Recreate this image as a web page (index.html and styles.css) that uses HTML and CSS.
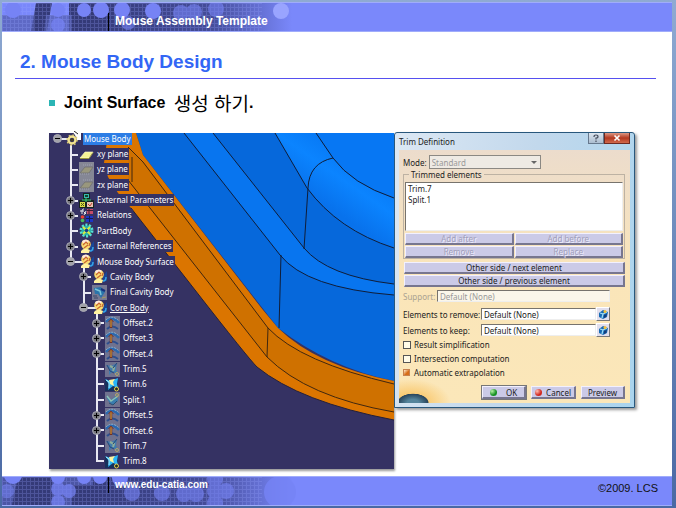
FILE: index.html
```html
<!DOCTYPE html>
<html lang="ko">
<head>
<meta charset="utf-8">
<meta name="viewport" content="width=device-width, initial-scale=1">
<title>Mouse Assembly Template</title>
<link rel="stylesheet" href="styles.css">
</head>
<body>
<svg class="defs" aria-hidden="true">
  <defs>
    <linearGradient id="fade" x1="0" x2="1" y1="0" y2="0">
      <stop offset="0" stop-color="#343a78"/><stop offset="0.6" stop-color="#454d9a"/><stop offset="1" stop-color="#7a88fb"/>
    </linearGradient>
    <pattern id="mesh" width="4" height="4" patternUnits="userSpaceOnUse">
      <path d="M0 .5H4M.5 0V4" stroke="#98a4ff" stroke-width="1" opacity=".25"/>
    </pattern>
    <linearGradient id="fillet" gradientUnits="userSpaceOnUse" x1="340" y1="215" x2="375" y2="165">
      <stop offset="0" stop-color="#0872ec"/><stop offset=".5" stop-color="#0b84ff"/><stop offset="1" stop-color="#0676f2"/>
    </linearGradient>
    <symbol id="i-root" viewBox="0 0 15 15">
      <path d="M6 0H15V9H11L9 4Z" fill="#fff"/><path d="M8 0L12 3" stroke="#222"/>
      <circle cx="6" cy="9" r="3.5" fill="none" stroke="#f2e490" stroke-width="2.5"/>
      <circle cx="6" cy="9" r="5" fill="none" stroke="#dccb74" stroke-width="1.5" stroke-dasharray="1.6 2.3"/><circle cx="6" cy="9" r="1.5" fill="#474020"/>
    </symbol>
    <symbol id="i-plane" viewBox="0 0 15 15"><path d="M1 11L6 5H14L10 11Z" fill="#f5f394" stroke="#fffed0" stroke-width=".6"/><path d="M1 11.5H10L14 5.5" fill="none" stroke="#99963c"/></symbol>
    <symbol id="i-planeoff" viewBox="0 0 15 15"><path fill="#858795" d="M0 0H15V15H0Z"/><path d="M1 11L6 5H14L10 11Z" fill="#99977d" stroke="#6f7072" stroke-width=".8"/><path d="M1 12H11M4 3H14" stroke="#a0a2b1" stroke-dasharray="1 1"/></symbol>
    <symbol id="i-params" viewBox="0 0 15 15"><path fill="#17251e" d="M4 0H11V7H15V15H0V7H4Z"/><path fill="#35b9ae" d="M5 1H10V5H5Z"/><path d="M6 2H9V4H6Z" fill="#17452f"/><path fill="#d9dd46" d="M1 9H6V14H1Z"/><path fill="#e9c6b3" d="M8 9H14V14H8Z"/><path d="M2 10L5 13M5 10L2 13" stroke="#4e521d"/><path d="M9 11L11 13L13 10" stroke="#bc3e31" fill="none"/><path d="M7 5V9M3 7H12" stroke="#3bd376"/></symbol>
    <symbol id="i-relations" viewBox="0 0 15 15"><path d="M5 1C3 1 3 2 3 6M1 3H5M5 4L7 6M7 3L5 7" stroke="#eee" fill="none"/><path fill="#c44d69" d="M8 1H14V6H8Z"/><path d="M8 2.5H14M10 1V6" stroke="#391c34"/><path fill="#1d36c5" d="M7 8H14V14H7Z"/><path d="M7 10.5H14M10.500 8V14" stroke="#111b56"/><circle cx="3.500" cy="9" r="1.800" fill="#eb4136"/><circle cx="3.500" cy="12.500" r="1.800" fill="#47bd59"/></symbol>
    <symbol id="i-part" viewBox="0 0 15 15"><circle cx="7.500" cy="7.500" r="5.500" fill="#168878" stroke="#57ded6" stroke-width="3" stroke-dasharray="2 1.450"/><circle cx="7.500" cy="7.500" r="4.500" fill="#28b3af"/><path d="M4 4L11 11M11 4L4 11" stroke="#d8e844" stroke-width="2"/><circle cx="7.500" cy="7.500" r="1.800" fill="#173c85"/></symbol>
    <symbol id="i-set" viewBox="0 0 15 15"><path d="M11 13L15 12V2L11 7Z" fill="#194697"/><circle cx="7" cy="5.500" r="4.800" fill="#f9dc72"/><path d="M3 2Q7-1 10 2L8 4H4Z" fill="#ffe9dc"/><path d="M4 6L7 3L9 5M5 9L9 6M10 7L11 4" fill="none" stroke="#c96432" stroke-width="1.200"/><path d="M2 12Q5 8 11 11L10 14H2Z" fill="#fff2a0"/><path d="M11 12Q14 12 14 8" fill="none" stroke="#39a5e6" stroke-width="1.500"/></symbol>
    <symbol id="i-join" viewBox="0 0 15 15"><path fill="#777992" d="M0 0H15V15H0Z"/><path d="M2 3L9 2L13 7L9 13L6 9L3 9Z" fill="#2b74aa"/><path d="M3 4L8 6L9 10" stroke="#7dc5d7" stroke-width="1.500" fill="none"/><path d="M9 4L13 6" stroke="#18337c" stroke-width="2"/><path d="M10 13L14 12" stroke="#a59d61"/><path d="M1 11H5M2 13H6" stroke="#38466a"/></symbol>
    <symbol id="i-offset" viewBox="0 0 15 15"><path fill="#70728f" d="M0 0H15V15H0Z"/><path d="M1 6Q7-1 14 7" fill="none" stroke="#2c68ae" stroke-width="2.500"/><path d="M1 4Q7-2 14 5" fill="none" stroke="#88b5d5" stroke-dasharray="2 1"/><path d="M2 13Q7 8 13 13" stroke="#2c4f90" stroke-width="2" fill="none"/><path d="M6 4V12" stroke="#732f25" stroke-width="2.500"/><path d="M6 4V11" stroke="#d9ad45"/><path d="M3.500 6L6 3L8.500 6" stroke="#7e3827" fill="none"/></symbol>
    <symbol id="i-trimoff" viewBox="0 0 15 15"><path fill="#70728f" d="M0 0H15V15H0Z"/><path d="M1 3L6 4L12 1L11 7L13 12L7 10L4 13L4 7Z" fill="#407bae"/><path d="M5 4L9 6L8 9" fill="none" stroke="#8dad9a" stroke-width="2"/><path d="M2 3L5 9L9 11M12 1L8 6" stroke="#284576" fill="none"/><circle cx="12" cy="12" r="1.500" fill="none" stroke="#b5a669"/></symbol>
    <symbol id="i-trim" viewBox="0 0 15 15"><path fill="#17315c" d="M0 3H13V14H0Z"/><path d="M0 2L5 4L13 1L12 7L13 11L8 9L3 13L4 7Z" fill="#29b5f7"/><path d="M4 3L10 2L8 5L9 9L5 7Z" fill="#fbf4a0"/><path d="M1 3L4 5L4 11" stroke="#a9eeff" fill="none"/><circle cx="11.500" cy="12" r="2" fill="#292e22" stroke="#e4d251"/></symbol>
    <symbol id="i-split" viewBox="0 0 15 15"><path fill="#70728f" d="M0 0H15V15H0Z"/><path d="M1 4L6 8L12 3L13 9L8 13L4 10Z" fill="#397cae"/><path d="M2 4L6 9L13 4" fill="none" stroke="#8dc2b5" stroke-width="1.500"/><path d="M4 11L8 13L12 9" stroke="#294d70" fill="none"/><circle cx="12" cy="3" r="1.500" fill="none" stroke="#b5a669"/></symbol>
    <symbol id="i-pick" viewBox="0 0 11 11"><path d="M1 4L5 1L10 3L9 8L5 10L1 8Z" fill="#166ab4"/><path d="M2 4L5 5L4 9M5 5L9 3" stroke="#9edcf5" stroke-width="1.300" fill="none"/><path d="M6 6L9 5L8 8L6 9Z" fill="#163d7b"/><circle cx="7" cy="2.500" r="1.500" fill="#f3c13b"/></symbol>
  </defs>
</svg>
<div class="slide">
  <header class="band">
    <svg class="bokeh" viewBox="0 0 300 28" preserveAspectRatio="none" aria-hidden="true">
      <path fill="#343a78" d="M34 0H50L45 28H29ZM67 0H91V28H67Z"/><path fill="#525cae" d="M0 12H32V28H0ZM44 12H70V28H42Z" opacity=".7"/>
      <path fill="url(#fade)" d="M91 0H290V28H91Z"/><path fill="url(#mesh)" d="M0 0H260V28H0Z"/>
      <g fill="#7683f5"><circle cx="11" cy="7" r="8"/><circle cx="56" cy="7" r="7"/><circle cx="56" cy="22" r="7" opacity=".7"/><circle cx="82" cy="7" r="7"/><circle cx="99" cy="7" r="8"/><circle cx="120" cy="7" r="8"/><circle cx="151" cy="8" r="8"/><g opacity=".6"><circle cx="179" cy="10" r="8"/><circle cx="192" cy="9" r="8"/><circle cx="214" cy="6" r="8"/><circle cx="126" cy="20" r="7"/></g></g>
      <circle cx="279" cy="8" r="8" fill="#99a4ff"/>
    </svg>
    <p class="band-title">Mouse Assembly Template</p>
  </header>
  <main>
    <h1>2. Mouse Body Design</h1>
    <h2>Joint Surface <span>생성 하기</span>.</h2>
    <div class="screens">
      <section class="viewport" aria-label="Model view">
        <svg class="scene" viewBox="49 133 345 336" preserveAspectRatio="none" aria-hidden="true">
          <path fill="#353263" d="M49 133H394V469H49Z"/>
          <path fill="#0668db" d="M136 133H394V381Q330 368 278 328L143 155Z"/>
          <path fill="#0875ef" d="M184 133H213L304 248Q327 276 394 284V295Q306 288 280 255Z"/>
          <path fill="url(#fillet)" d="M275 133H316L333 158Q352 184 394 198V248Q338 230 307 188Z"/>
          <path fill="#0777f3" d="M316 133H394V198Q352 184 333 158Z"/>
          <path fill="#db7500" d="M108 133H136L143 155L263 310L278 328Q317 366 394 381V420Q300 402 257 367Q248 358 195 290L131 208L118 193L108 177L104 163Z"/>
          <path fill="#cf7100" d="M128 147L143 162L268 328Q300 362 394 384V412Q307 397 267 357L128 180Z"/>
          <g fill="none" stroke="#101d38" stroke-width="1">
            <path d="M184 133L280 255Q306 288 394 295M213 133L304 248Q327 276 394 284M275 133L307 188Q338 230 394 248M316 133L333 158Q352 184 394 198M333 158Q309 163 308 188L304 249M281 255L279 328"/>
            <path stroke="#40270f" d="M128 147L143 162L268 328Q300 362 394 384M128 180L267 357Q307 397 394 412M268 328L267 357M132 157V182"/>
            <path d="M131 208L195 290Q248 358 257 367Q300 402 394 420" stroke="#25203a"/>
          </g>
          <g fill="none" stroke="#e8e8f2" stroke-width="2">
            <path d="M58 139H68M71 145V262H84M71 155H78M71 170H78M71 185H78M71 201H78M71 216H78M71 231H78M71 247H78"/>
            <path d="M84 266V308H97M84 277H91M84 293H91"/>
            <path d="M97 312V461H104M97 323H104M97 338H104M97 354H104M97 369H104M97 384H104M97 400H104M97 415H104M97 430H104M97 446H104"/>
          </g>
        </svg>
        <ul class="tree">
          <li class="root"><button class="knob open" aria-label="Collapse"></button><svg><use href="#i-root"/></svg><span class="selected">Mouse Body</span></li>
          <li><svg><use href="#i-plane"/></svg><span>xy plane</span></li>
          <li><svg><use href="#i-planeoff"/></svg><span>yz plane</span></li>
          <li><svg><use href="#i-planeoff"/></svg><span>zx plane</span></li>
          <li><button class="knob" aria-label="Expand"></button><svg><use href="#i-params"/></svg><span>External Parameters</span></li>
          <li><button class="knob" aria-label="Expand"></button><svg><use href="#i-relations"/></svg><span>Relations</span></li>
          <li><svg><use href="#i-part"/></svg><span>PartBody</span></li>
          <li><button class="knob" aria-label="Expand"></button><svg><use href="#i-set"/></svg><span>External References</span></li>
          <li><button class="knob open" aria-label="Collapse"></button><svg><use href="#i-set"/></svg><span>Mouse Body Surface</span></li>
          <li class="sub"><button class="knob" aria-label="Expand"></button><svg><use href="#i-set"/></svg><span>Cavity Body</span></li>
          <li class="sub"><svg><use href="#i-join"/></svg><span>Final Cavity Body</span></li>
          <li class="sub"><button class="knob open" aria-label="Collapse"></button><svg><use href="#i-set"/></svg><span class="current">Core Body</span></li>
          <li class="leaf"><button class="knob" aria-label="Expand"></button><svg><use href="#i-offset"/></svg><span>Offset.2</span></li>
          <li class="leaf"><button class="knob" aria-label="Expand"></button><svg><use href="#i-offset"/></svg><span>Offset.3</span></li>
          <li class="leaf"><button class="knob" aria-label="Expand"></button><svg><use href="#i-offset"/></svg><span>Offset.4</span></li>
          <li class="leaf"><svg><use href="#i-trimoff"/></svg><span>Trim.5</span></li>
          <li class="leaf"><svg><use href="#i-trim"/></svg><span>Trim.6</span></li>
          <li class="leaf"><svg><use href="#i-split"/></svg><span>Split.1</span></li>
          <li class="leaf"><button class="knob" aria-label="Expand"></button><svg><use href="#i-offset"/></svg><span>Offset.5</span></li>
          <li class="leaf"><button class="knob" aria-label="Expand"></button><svg><use href="#i-offset"/></svg><span>Offset.6</span></li>
          <li class="leaf"><svg><use href="#i-trimoff"/></svg><span>Trim.7</span></li>
          <li class="leaf"><svg><use href="#i-trim"/></svg><span>Trim.8</span></li>
        </ul>
      </section>
      <form class="dialog" aria-labelledby="dialog-title">
        <div class="titlebar">
          <h3 id="dialog-title">Trim Definition</h3>
          <div class="window-buttons">
            <button type="button" aria-label="Help"><svg viewBox="0 0 8 8"><path d="M2 3Q2 1 4 1T6 3Q6 4 4 4V5.500M4 6.500V8" fill="none" stroke="#444c5c" stroke-width="1.200"/></svg></button>
            <button type="button" class="close" aria-label="Close"><svg viewBox="0 0 8 8"><path d="M1.500 1.500L6.500 6.500M6.500 1.500L1.500 6.500" stroke="#fff" stroke-width="1.600"/></svg></button>
          </div>
        </div>
        <div class="panel">
          <div class="mode"><label for="mode">Mode:</label><span class="drop"><select id="mode" disabled><option>Standard</option></select></span></div>
          <fieldset>
            <legend>Trimmed elements</legend>
            <select class="elements" size="4" aria-label="Trimmed elements"><option>Trim.7</option><option>Split.1</option></select>
            <div class="actions">
              <button type="button" class="btn" disabled>Add after</button><button type="button" class="btn" disabled>Add before</button>
              <button type="button" class="btn" disabled>Remove</button><button type="button" class="btn" disabled>Replace</button>
            </div>
          </fieldset>
          <div class="sides">
            <button type="button" class="btn">Other side / next element</button>
            <button type="button" class="btn">Other side / previous element</button>
          </div>
          <div class="field support"><label for="support">Support:</label><input id="support" value="Default (None)" disabled></div>
          <div class="field"><label for="remove">Elements to remove:</label><input id="remove" value="Default (None)"><button type="button" class="pick" aria-label="Select elements to remove"><svg><use href="#i-pick"/></svg></button></div>
          <div class="field"><label for="keep">Elements to keep:</label><input id="keep" value="Default (None)"><button type="button" class="pick" aria-label="Select elements to keep"><svg><use href="#i-pick"/></svg></button></div>
          <div class="checks">
            <label><input type="checkbox">Result simplification</label>
            <label><input type="checkbox">Intersection computation</label>
            <label><input type="checkbox" checked>Automatic extrapolation</label>
          </div>
          <div class="confirm">
            <button type="submit" class="btn ok"><i class="lamp green"></i>OK</button>
            <button type="button" class="btn"><i class="lamp red"></i>Cancel</button>
            <button type="button" class="btn">Preview</button>
          </div>
        </div>
      </form>
    </div>
  </main>
  <footer class="band">
    <svg class="bokeh" viewBox="0 0 300 28" preserveAspectRatio="none" aria-hidden="true">
      <path fill="#4c56a5" d="M0 0H91V28H0Z"/><path fill="#343a78" d="M16 0H50V28H10ZM70 8H91V28H70Z"/>
      <path fill="url(#fade)" d="M91 0H290V28H91Z"/><path fill="url(#mesh)" d="M0 0H260V28H0Z"/>
      <g fill="#7683f5"><circle cx="11" cy="-2" r="9"/><circle cx="5" cy="14" r="7" opacity=".5"/><circle cx="56" cy="0" r="7"/><g opacity=".7"><circle cx="56" cy="12" r="7"/><circle cx="56" cy="25" r="7"/><circle cx="67" cy="14" r="7"/></g><circle cx="82" cy="0" r="7"/><circle cx="98" cy="0" r="7"/><circle cx="118" cy="1" r="8"/><g opacity=".6"><circle cx="130" cy="16" r="8"/><circle cx="160" cy="16" r="8"/><circle cx="182" cy="17" r="8"/><circle cx="194" cy="17" r="8"/><circle cx="213" cy="2" r="8"/><circle cx="213" cy="14" r="8"/><circle cx="213" cy="26" r="8"/><circle cx="224" cy="14" r="8"/></g><circle cx="278" cy="15" r="16" opacity=".8"/></g>
    </svg>
    <a class="site" href="#">www.edu-catia.com</a>
    <p class="copyright">©2009. LCS</p>
  </footer>
</div>
</body>
</html>
```
FILE: styles.css
```css
* { box-sizing: border-box; }
body {
  margin: 0;
  min-height: 100vh;
  padding: 2px 4px 2px 2px;
  display: flex;
  background: linear-gradient(180deg, #8faad2, #4a69a4);
  font-family: "Liberation Sans", Arial, "Noto Sans CJK KR", sans-serif;
}
h1, h2, h3, p, ul { margin: 0; padding: 0; }
button, input, select { font: inherit; color: inherit; margin: 0; }
.defs { position: absolute; width: 0; height: 0; }

.slide { flex: 1; display: flex; flex-direction: column; background: #fff; }
main { flex: 1; }

.band {
  position: relative;
  height: 30px;
  display: flex;
  border: solid #a0acfb;
  border-width: 1px 0;
  background: #7a88fb;
  color: #fff;
}
.bokeh { position: absolute; left: 0; top: 0; width: 300px; height: 28px; }
.band-title, .site {
  position: relative;
  margin-left: 106px;
  padding-left: 6px;
  border-left: 1px solid #000;
  font-weight: bold;
}
.band-title { margin-top: 10px; font-size: 12px; line-height: 16px; }
.site { height: 16px; font-size: 10px; line-height: 16px; text-decoration: none; color: #fff; }
.copyright { margin: 4px 14px 0 auto; font-size: 11px; line-height: 14px; color: #111; }

h1 {
  margin: 16px 16px 0 13px;
  padding: 1px 5px 3px;
  border-bottom: 1px solid #5650f0;
  font-size: 19px;
  line-height: 26px;
  color: #3366f5;
}
h2 {
  display: flex;
  align-items: center;
  margin: 12px 0 18px 47px;
  font-size: 16px;
  line-height: 24px;
  white-space: pre;
}
h2::before { content: ""; width: 6px; height: 6px; margin-right: 9px; background: #2bb5b5; }
h2 span { padding-left: 4px; font-weight: 400; font-size: 19px; font-family: "Noto Sans CJK KR", sans-serif; }

.screens {
  display: grid;
  grid-template-columns: 345fr 241fr;
  align-items: start;
  padding: 0 37px 0 47px;
}
.viewport { position: relative; box-shadow: 1px 2px 2px #9a9a9a; }
.scene { display: block; width: 100%; height: 336px; }

.tree {
  position: absolute;
  inset: -2px 0 0 0;
  display: grid;
  grid-auto-rows: 1fr;
  list-style: none;
  font-family: "Noto Sans", sans-serif;
  font-size: 8px;
  line-height: 12px;
  color: #fff;
}
.tree li { position: relative; display: flex; align-items: center; gap: 2px; padding-left: 30px; }
.tree .root { padding-left: 17px; }
.tree .sub { padding-left: 43px; }
.tree .leaf { padding-left: 56px; }
.tree svg { width: 15px; height: 15px; }
.tree span { padding: 0 1px; background: #353263; }
.tree .selected { background: #2c7de5; }
.tree .current { text-decoration: underline; }
.knob {
  width: 9px;
  height: 9px;
  margin-left: -13px;
  margin-right: 2px;
  padding: 0;
  border: 1px solid #a9a9b5;
  border-radius: 50%;
  background:
    linear-gradient(#000, #000) center / 5px 1px no-repeat,
    linear-gradient(#000, #000) center / 1px 5px no-repeat,
    #77777f;
}
.knob.open { background: linear-gradient(#000, #000) center / 5px 1px no-repeat, #a2a2a8; }

.dialog {
  position: relative;
  margin-top: -1px;
  padding: 0 4px 4px;
  border: 1px solid #28577c;
  border-radius: 3px 3px 0 0;
  background: linear-gradient(100deg, #dce8f4, #c2d8ec 50%, #a9d4ee);
  box-shadow: 2px 2px 3px #999;
  font-family: "Noto Sans", sans-serif;
  font-size: 8px;
  line-height: 11px;
  color: #222;
}
.titlebar { display: flex; justify-content: space-between; height: 17px; }
.titlebar h3 { font-size: 8px; font-weight: 400; line-height: 17px; }
.window-buttons { display: flex; height: 11px; }
.window-buttons button {
  width: 16px;
  padding: 0;
  border: 1px solid #66788d;
  border-top: 0;
  background: linear-gradient(#dce5ef, #abbdd0);
  line-height: 0;
}
.window-buttons .close { width: 26px; background: linear-gradient(#dd9885, #b53820 50%, #d0694c); border-color: #6e2a22; }
.window-buttons svg { width: 8px; height: 8px; }
.panel {
  padding: 5px 5px 4px 4px;
  background:
    radial-gradient(ellipse 20px 12px at 14px 100%, #55849b 30%, #29455c 75%, transparent 80%),
    radial-gradient(ellipse 40px 24px at 12px 100%, #f8ba4b, transparent),
    linear-gradient(#ecdccc, #fae5b9 50%, #fbe7b9);
}
.mode { display: flex; align-items: center; gap: 2px; }
.drop { position: relative; flex: 0 1 112px; }
.drop::after {
  content: "";
  position: absolute;
  right: 4px;
  top: 6px;
  border: solid transparent;
  border-width: 3px 3px 0;
  border-top-color: #666;
}
.drop select { display: block; }
select, .field input {
  appearance: none;
  width: 100%;
  padding: 0 2px;
  border: 1px solid #77736d;
  border-right-color: #eee;
  border-bottom-color: #eee;
  border-radius: 0;
  background: #fff;
}
.mode select { height: 14px; background: #eeeae4; color: #999; opacity: 1; border-color: #8b8883; }
fieldset { min-width: 0; margin: 0; padding: 2px 1px 0; border: 1px solid #bdb2a3; }
legend { margin-left: 4px; padding: 0 2px; line-height: 11px; }
.elements { display: block; height: 49px; overflow: hidden; }
.elements option { padding: 0; min-height: 0; line-height: 10px; }
.actions { display: grid; grid-template-columns: 1fr 1fr; gap: 1px; margin-top: 2px; }
.btn {
  height: 12px;
  padding: 0 8px;
  border: 1px solid #f2f0ff;
  border-right: 2px solid #77768f;
  border-bottom: 2px solid #77768f;
  background: #cbcae7;
  line-height: 9px;
}
.btn:disabled { color: #a19fba; text-shadow: 1px 1px #efedfc; }
.sides { display: grid; gap: 1px; margin: 3px 0 3px 1px; }
.field { display: grid; grid-template-columns: 78px 115px 14px; align-items: center; height: 12px; margin-bottom: 4px; white-space: nowrap; }
.field input { height: 12px; }
.support { grid-template-columns: 34px 173px; margin-bottom: 5px; color: #aaa291; }
.support input { background: #fbf6ea; color: #999; }
.pick { width: 14px; height: 14px; padding: 0; border: 1px solid #fff; border-right-color: #777; border-bottom-color: #777; background: #e1dfed; line-height: 0; }
.pick svg { width: 11px; height: 11px; }
.checks { display: grid; gap: 3px; }
.checks label { display: flex; align-items: center; gap: 3px; }
.checks input { appearance: none; width: 8px; height: 8px; border: 1px solid #555; background: #fffbe8; }
.checks input:checked { width: 7px; height: 7px; margin-right: 1px; border-color: #c7824f; background: linear-gradient(135deg, #fff0d5, #d76e19 60%); }
.confirm { display: flex; justify-content: flex-end; gap: 5px; margin-top: 8px; }
.confirm .btn { display: flex; align-items: center; justify-content: center; gap: 4px; height: 13px; min-width: 44px; padding: 0 3px; }
.confirm .ok { gap: 9px; outline: 1px solid #777; }
.lamp { width: 7px; height: 7px; border-radius: 50%; }
.green { background: radial-gradient(circle at 30% 30%, #b7f2a5, #159021 60%); }
.red { background: radial-gradient(circle at 30% 30%, #ffc1b5, #d1271e 60%); }
```
